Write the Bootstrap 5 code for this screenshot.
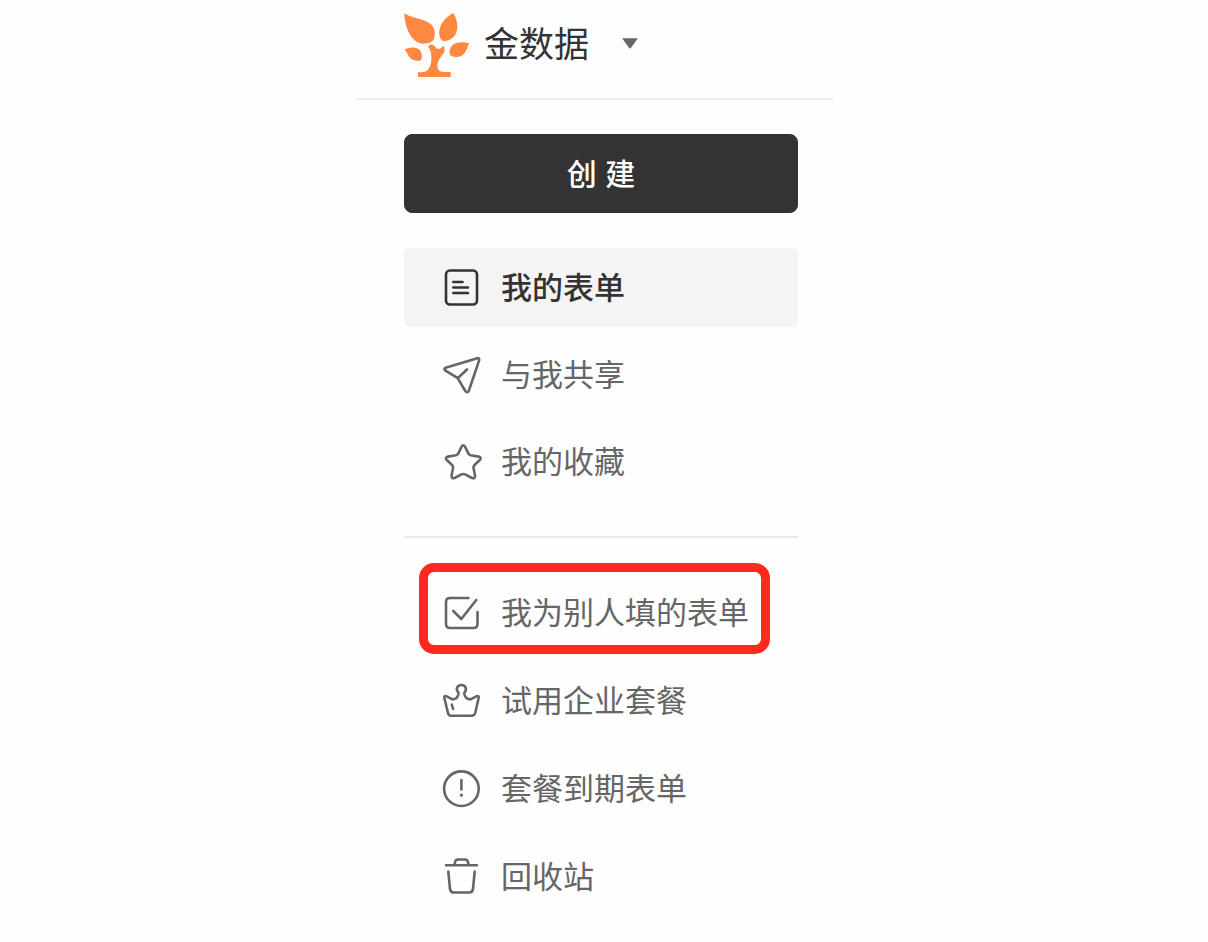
<!DOCTYPE html>
<html lang="zh-CN">
<head>
<meta charset="utf-8">
<meta name="viewport" content="width=device-width, initial-scale=1">
<title>金数据</title>
<link href="https://cdn.jsdelivr.net/npm/bootstrap@5.3.0/dist/css/bootstrap.min.css" rel="stylesheet">
<style>
  body { font-family: "Liberation Sans", "Noto Sans CJK SC", sans-serif; color: #333; background: #fefefe; }
  .page { display: grid; grid-template-columns: 356fr 478fr 374fr; }
  .side { grid-column: 2; min-width: 0; }
  .brand { height: 100px; padding: 0 48px 8px; border-bottom: 2px solid #eee; }
  .brand-name { font-size: 35px; line-height: 48px; font-weight: 400; margin: 0 0 0 14px; }
  .brand .caret { margin: 0 0 4px 33px; line-height: 0; }
  .side-body { padding: 34px 36px 20px 48px; }
  .btn-create { height: 79px; font-size: 30px; font-weight: 500; border-radius: 8px; padding: 2px 0 0; margin-bottom: 35px;
    --bs-btn-color: #fff; --bs-btn-bg: #333; --bs-btn-border-color: #333;
    --bs-btn-hover-color: #fff; --bs-btn-hover-bg: #444; --bs-btn-hover-border-color: #444; }
  .menu { gap: 8px; }
  .menu-more { gap: 9px; }
  .nav .nav-link { height: 79px; padding: 0 0 0 38px; gap: 19px; color: #666; font-size: 31px; line-height: 40px; border-radius: 6px; white-space: nowrap; }
  .nav .nav-link.active { color: #333; background: #f4f4f4; font-weight: 500; }
  .nav-link span { padding-top: 2px; }
  .nav svg { width: 40px; height: 40px; flex: none; fill: none; stroke: currentColor; stroke-width: 2.6; stroke-linecap: round; stroke-linejoin: round; }
  .rule { height: 2px; background: #e8e8e8; margin: 35px 0; }
  .marker { position: absolute; inset: -10px 28px -2px 15px; border: 9px solid #ff2a1e; border-radius: 15px; pointer-events: none; }
</style>
</head>
<body>
<div class="page">
  <aside class="side">
    <header class="brand d-flex align-items-center">
      <svg width="66" height="64" viewBox="27 27 198 192" fill="#ff8841" aria-hidden="true">
        <path d="M28 28C48 41 76 44 98 54C119 65 123 84 117 103C114 115 101 119 84 119C51 118 30 76 28 28Z"/>
        <path d="M175 27C153 38 136 58 133 80C131 100 138 111 149 111C169 111 187 93 187 70C187 54 183 40 175 27Z"/>
        <path d="M28 137C45 128 70 128 77 142C81 149 82 160 79 167C72 173 58 171 49 165C40 158 37 144 28 137Z"/>
        <path d="M223 118C202 112 178 114 168 128C163 136 162 148 166 154C174 161 192 161 203 153C215 145 216 129 223 118Z"/>
        <path d="M99 128C104 121 111 120 116 124C121 129 124 134 128 135C137 134 142 130 146 125C149 132 150 139 147 146C138 157 128 170 127 184C127 199 135 205 148 204H167V219H69V205C76 205 87 205 96 200C106 191 110 174 109 158C108 146 108 138 99 128Z"/>
      </svg>
      <h1 class="brand-name">金数据</h1>
      <button type="button" class="caret btn p-0 border-0" aria-label="切换">
        <svg width="16" height="11" viewBox="0 0 16 11" aria-hidden="true"><path d="M1 .2h14q1 0 .4.8L8.8 10q-.8 1-1.6 0L.6 1Q0 .2 1 .2Z" fill="#666"/></svg>
      </button>
    </header>
    <div class="side-body">
      <button type="button" class="btn btn-create w-100 d-block">创 建</button>
      <nav>
        <ul class="menu nav flex-column">
          <li><a class="nav-link active d-flex align-items-center" href="#" aria-current="page">
            <svg viewBox="0 0 40 40"><rect x="4" y="2.5" width="31" height="34" rx="4"/><path d="M11.3 14H20.5M11.3 19.5H26M11.3 25H26"/></svg><span>我的表单</span></a></li>
          <li><a class="nav-link d-flex align-items-center" href="#">
            <svg viewBox="0 0 40 40"><path d="M35.3 3.2L3.6 12.8Q1.4 13.8 3.2 15.3L15.7 23.2L23.3 36Q25.3 38.6 26.8 35.8L37.2 5.2Q37.4 2.8 35.3 3.2ZM15.7 23.2L25 14.5"/></svg><span>与我共享</span></a></li>
          <li><a class="nav-link d-flex align-items-center" href="#">
            <svg viewBox="0 0 40 40"><path d="M19.6 4.6Q21.3 2 23 4.6L26.3 11.4Q27 12.8 28.6 13.2L36.6 14.6Q40 15.6 37.8 18L32.3 23.2Q31.4 24.4 31.5 25.8L33 33.6Q33.2 37 30 36L23.2 32.4Q21.3 31.6 19.4 32.4L12.6 36Q9.4 37 9.6 33.6L11.1 25.8Q11.2 24.4 10.3 23.2L4.8 18Q2.6 15.6 6 14.6L14 13.2Q15.6 12.8 16.3 11.4Z"/></svg><span>我的收藏</span></a></li>
        </ul>
        <div class="rule"></div>
        <ul class="menu-more nav flex-column">
          <li class="position-relative"><a class="nav-link d-flex align-items-center" href="#">
            <svg viewBox="0 0 40 40"><path d="M26.5 5H8Q4 5 4 9V31Q4 35 8 35H31.5Q35.5 35 35.5 31V19M11.3 18L19.3 26L34.3 7"/></svg><span>我为别人填的表单</span></a><div class="marker"></div></li>
          <li><a class="nav-link d-flex align-items-center" href="#">
            <svg viewBox="0 0 40 40"><path d="M16.6 12C13 7.6 15.6 4 19.4 4S25.8 7.6 22.2 12C22.6 16.5 25.5 18.3 28.5 18.4L34.8 15.2Q37 14.6 36.7 16.8L33.2 32Q32.4 34.7 29.8 34.7H9Q6.6 34.7 6 32L2.3 16.8Q2 14.6 4.2 15.2L10.5 18.4C13.4 18.3 16.2 16.5 16.6 12ZM9.8 23.5L11.1 28"/></svg><span>试用企业套餐</span></a></li>
          <li><a class="nav-link d-flex align-items-center" href="#">
            <svg viewBox="0 0 40 40"><circle cx="19.4" cy="19.7" r="17.3"/><path d="M19.4 11V20.5"/><circle cx="19.4" cy="26.2" r="1.6" fill="currentColor" stroke="none"/></svg><span>套餐到期表单</span></a></li>
          <li><a class="nav-link d-flex align-items-center" href="#">
            <svg viewBox="0 0 40 40"><path d="M4 8.3H35M12.5 8.3L13 5Q13.6 2.5 16 2.5H23Q25.4 2.5 26 5L26.5 8.3M6.3 14.5L8 32Q8.4 35.5 12 35.5H27Q30.6 35.5 31 32L32.7 14.5"/></svg><span>回收站</span></a></li>
        </ul>
      </nav>
    </div>
  </aside>
</div>
<script src="https://cdn.jsdelivr.net/npm/bootstrap@5.3.0/dist/js/bootstrap.bundle.min.js"></script>
</body>
</html>
